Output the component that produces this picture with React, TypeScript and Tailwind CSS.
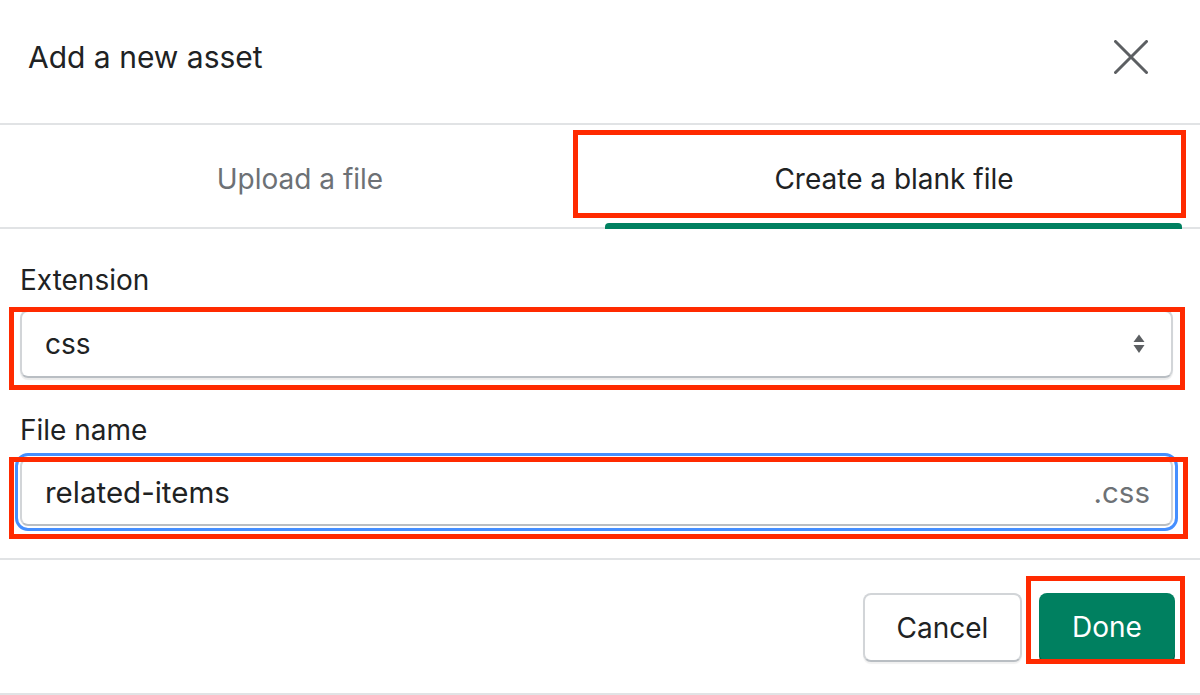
const Annotation = ({ className }: { className: string }) => (
  <div className={`pointer-events-none absolute border-[5px] border-[#ff2a00] ${className}`} />
);

const CloseIcon = () => (
  <svg width="34" height="34" viewBox="0 0 34 34" fill="none" stroke="#5c5f62" strokeWidth="3" strokeLinecap="round">
    <path d="M1.5 1.5 L32.5 32.5 M32.5 1.5 L1.5 32.5" />
  </svg>
);

const SelectArrows = () => (
  <svg width="12" height="20" viewBox="0 0 12 20" fill="#5c5f62">
    <path d="M6 0.5 L11.5 8 L0.5 8 Z" />
    <path d="M0.5 11 L11.5 11 L6 19 Z" />
  </svg>
);

export default function App() {
  return (
    <div className="h-[695px] w-[1200px] overflow-hidden bg-white text-[#202223] font-['Inter','Noto_Sans',sans-serif] text-[28px]">
      {/* header */}
      <div className="flex h-[123px] items-center justify-between pb-[9px] pl-[28px] pr-[52px]">
        <h2 className="text-[30px] leading-[40px] font-normal">Add a new asset</h2>
        <CloseIcon />
      </div>

      {/* tabs */}
      <div className="flex h-[106px] border-y-2 border-[#e1e3e5]">
        <button className="w-[600px] pt-[6px] text-center text-[#6d7175]">Upload a file</button>
        <button className="relative w-[588px] pt-[6px] text-center text-[#202223]">
          Create a blank file
          <span className="absolute bottom-[-2px] left-[5px] right-[6px] h-[6px] rounded-t-[4px] bg-[#008060]" />
          <Annotation className="left-[-27px] right-[2px] top-[5px] bottom-[9px]" />
        </button>
      </div>

      {/* body */}
      <div className="flex flex-col pl-[20px] pr-[27px] pt-[31px] pb-[32px]">
        <label className="leading-[40px]">Extension</label>
        <div className="relative mt-[10px] flex h-[68px] items-center justify-between rounded-[8px] border-2 border-[#d2d5d8] border-b-[#b9bec3] pl-[23px] pr-[26px] shadow-[0_2px_1px_rgba(0,0,0,0.08)]">
          <span>css</span>
          <SelectArrows />
          <Annotation className="left-[-13px] right-[-14px] top-[-5px] bottom-[-14px]" />
        </div>

        <label className="mt-[32px] leading-[40px]">File name</label>
        <div className="relative mt-[8px] flex h-[68px] items-center justify-between rounded-[8px] border-2 border-[#d2d5d8] border-b-[#b9bec3] pl-[23px] pr-[21px] text-[29.5px] outline-3 outline-offset-2 outline-[#458fff]">
          <span>related-items</span>
          <span className="text-[#6d7175]">.css</span>
          <Annotation className="left-[-13px] right-[-17px] top-[-3px] bottom-[-15px]" />
        </div>
      </div>

      {/* footer */}
      <div className="flex h-[137px] items-start justify-end gap-[17px] border-y-2 border-[#e1e3e5] pt-[33px] pr-[25px]">
        <button className="h-[69px] w-[159px] rounded-[8px] border-2 border-[#d2d5d8] border-b-[#b9bec3] bg-white text-[#202223] shadow-[0_2px_1px_rgba(0,0,0,0.06)]">
          Cancel
        </button>
        <button className="relative h-[68px] w-[136px] rounded-[8px] bg-[#008060] text-white shadow-[0_3px_0_#005e46]">
          Done
          <Annotation className="left-[-13px] right-[-10px] top-[-17px] bottom-[-3px]" />
        </button>
      </div>
    </div>
  );
}
